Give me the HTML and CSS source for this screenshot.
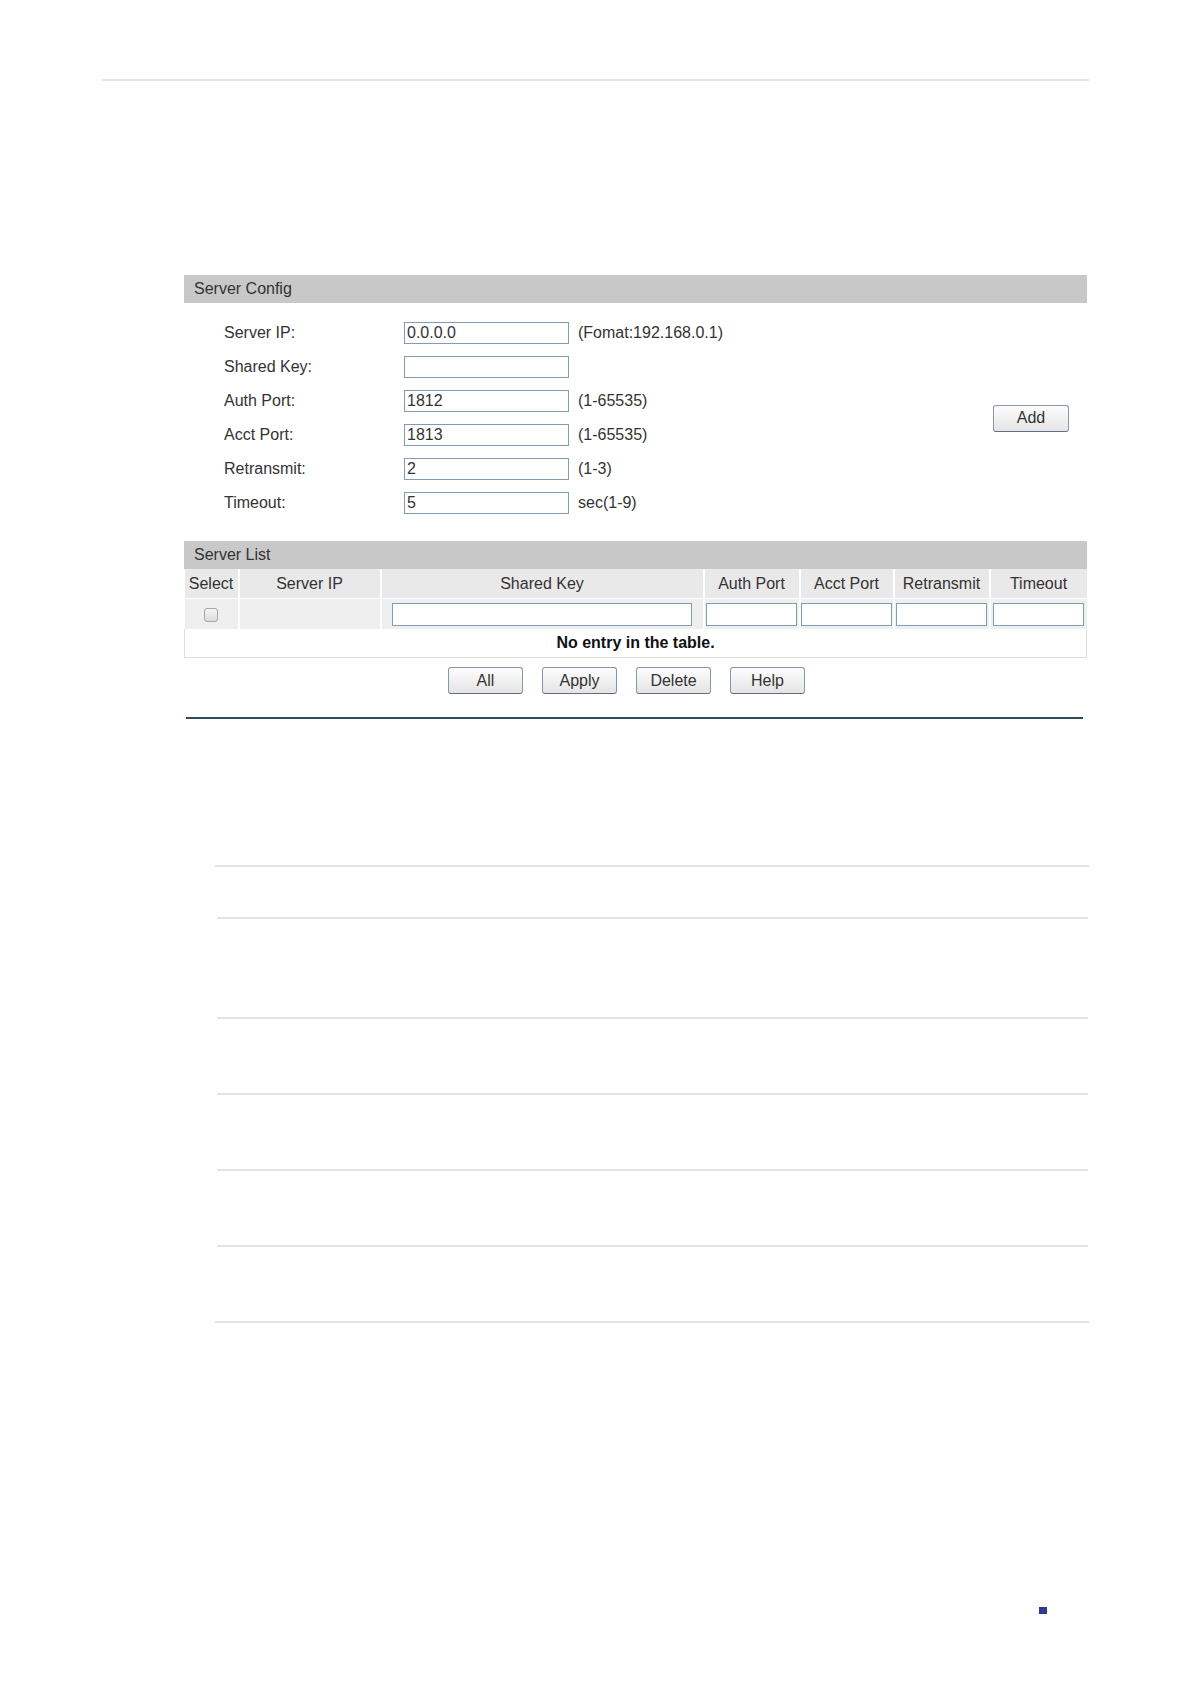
FILE: index.html
```html
<!DOCTYPE html>
<html>
<head>
    <meta charset="UTF-8">
    <title>RADIUS Server Config</title>
    <link rel="stylesheet" href="styles.css">
</head>
<body>
    <div class="page">
        <div class="top-rule"></div>

        <div class="panel">
            <div class="bar">Server Config</div>
            <div class="config">
                <div class="form">
                    <div class="row">
                        <label>Server IP:</label>
                        <input type="text" value="0.0.0.0">
                        <span class="hint">(Fomat:192.168.0.1)</span>
                    </div>
                    <div class="row">
                        <label>Shared Key:</label>
                        <input type="text" value="">
                    </div>
                    <div class="row">
                        <label>Auth Port:</label>
                        <input type="text" value="1812">
                        <span class="hint">(1-65535)</span>
                    </div>
                    <div class="row">
                        <label>Acct Port:</label>
                        <input type="text" value="1813">
                        <span class="hint">(1-65535)</span>
                    </div>
                    <div class="row">
                        <label>Retransmit:</label>
                        <input type="text" value="2">
                        <span class="hint">(1-3)</span>
                    </div>
                    <div class="row">
                        <label>Timeout:</label>
                        <input type="text" value="5">
                        <span class="hint">sec(1-9)</span>
                    </div>
                </div>
                <div class="side">
                    <button class="btn">Add</button>
                </div>
            </div>

            <div class="bar">Server List</div>
            <table class="list">
                <tr class="head">
                    <td class="c-sel">Select</td>
                    <td class="c-ip">Server IP</td>
                    <td class="c-key">Shared Key</td>
                    <td class="c-auth">Auth Port</td>
                    <td class="c-acct">Acct Port</td>
                    <td class="c-ret">Retransmit</td>
                    <td class="c-time">Timeout</td>
                </tr>
                <tr class="edit">
                    <td><span class="check"></span></td>
                    <td></td>
                    <td class="key-cell"><input type="text" class="key-input"></td>
                    <td><input type="text"></td>
                    <td><input type="text"></td>
                    <td><input type="text"></td>
                    <td><input type="text"></td>
                </tr>
                <tr class="empty">
                    <td colspan="7">No entry in the table.</td>
                </tr>
            </table>

            <div class="actions">
                <button class="btn">All</button>
                <button class="btn">Apply</button>
                <button class="btn">Delete</button>
                <button class="btn">Help</button>
            </div>

            <div class="end-rule"></div>
        </div>

        <div class="lines">
            <div class="line l1"></div>
            <div class="line l2"></div>
            <div class="line l3"></div>
            <div class="line l4"></div>
            <div class="line l5"></div>
            <div class="line l6"></div>
            <div class="line l7"></div>
        </div>

        <div class="footer">
            <span class="mark"></span>
        </div>
    </div>
</body>
</html>
```

FILE: styles.css
```css
body {
    margin: 0;
    background: #fff;
    font-family: "Liberation Sans", Arial, sans-serif;
    font-size: 16px;
    color: #333;
}

.page {
    width: 1191px;
    padding-top: 79px;
}

.top-rule {
    margin-left: 102px;
    width: 987px;
    height: 2px;
    background: #e3e3e3;
}

.panel {
    margin: 194px 0 0 184px;
    width: 903px;
}

.bar {
    height: 28px;
    line-height: 28px;
    background: #c8c8c8;
    padding-left: 10px;
}

/* server config form */
.config {
    display: flex;
    align-items: center;
    padding: 13px 0 21px;
}

.form {
    flex: 1;
}

.row {
    display: flex;
    align-items: center;
    height: 34px;
}

.row label {
    width: 220px;
    flex-shrink: 0;
    padding-left: 40px;
    box-sizing: border-box;
}

input[type="text"] {
    font-family: "Liberation Sans", Arial, sans-serif;
    font-size: 16px;
    color: #333;
    height: 22px;
    padding: 0 2px;
    border: 1px solid #7f9db9;
    box-sizing: border-box;
    outline: none;
    background: #fff;
}

.row input {
    width: 165px;
}

.hint {
    margin-left: 9px;
}

.side {
    padding-right: 18px;
}

.btn {
    font-family: "Liberation Sans", Arial, sans-serif;
    font-size: 16px;
    color: #333;
    width: 76px;
    height: 27px;
    padding: 0;
    border: 1px solid #8796ad;
    border-bottom-color: #5f6f88;
    border-radius: 3px;
    background: linear-gradient(#fdfdfd, #e4e4e4);
    cursor: pointer;
}

/* server list table */
.list {
    width: 902px;
    border-collapse: collapse;
    table-layout: fixed;
}

.list td {
    text-align: center;
    padding: 0;
}

.head td {
    height: 29px;
    background: #e9e9e9;
    border-left: 2px solid #fff;
}

.edit td {
    height: 30px;
    background: #efefef;
    border-left: 2px solid #fff;
    border-top: 1px solid #fff;
}

.head td:first-child,
.edit td:first-child {
    border-left: none;
}

.c-sel { width: 53px; }
.c-ip { width: 140px; }
.c-key { width: 321px; }
.c-auth { width: 94px; }
.c-acct { width: 92px; }
.c-ret { width: 94px; }
.c-time { width: 96px; }

.edit input {
    width: 91px;
    height: 23px;
    vertical-align: middle;
}

.edit .key-cell {
    text-align: left;
}

.edit .key-input {
    width: 300px;
    margin-left: 10px;
}

.check {
    display: inline-block;
    width: 12px;
    height: 12px;
    border: 1px solid #a8a8a8;
    border-radius: 3px;
    background: linear-gradient(#f4f4f4, #dcdcdc);
    vertical-align: middle;
}

.empty td {
    height: 28px;
    font-weight: bold;
    color: #111;
    border: 1px solid #dedede;
    border-top: none;
    background: #fff;
}

.actions {
    display: flex;
    gap: 19px;
    padding: 9px 0 0 264px;
}

.actions .btn {
    width: 75px;
}

.end-rule {
    margin: 23px 0 0 2px;
    width: 897px;
    height: 2px;
    background: #2e4a5c;
}

/* empty ruled area below */
.lines {
    margin-left: 215px;
    width: 874px;
}

.line {
    height: 2px;
    background: #e2e2e2;
}

.l1 { margin-top: 146px; }
.l2 { margin-top: 50px; margin-left: 2px; margin-right: 1px; }
.l3 { margin-top: 98px; margin-left: 2px; margin-right: 1px; }
.l4 { margin-top: 74px; margin-left: 2px; margin-right: 1px; }
.l5 { margin-top: 74px; margin-left: 2px; margin-right: 1px; }
.l6 { margin-top: 74px; margin-left: 2px; margin-right: 1px; }
.l7 { margin-top: 74px; }

.footer {
    padding: 284px 0 0 1039px;
}

.mark {
    display: block;
    width: 8px;
    height: 7px;
    background: #2e3a8c;
}
```
